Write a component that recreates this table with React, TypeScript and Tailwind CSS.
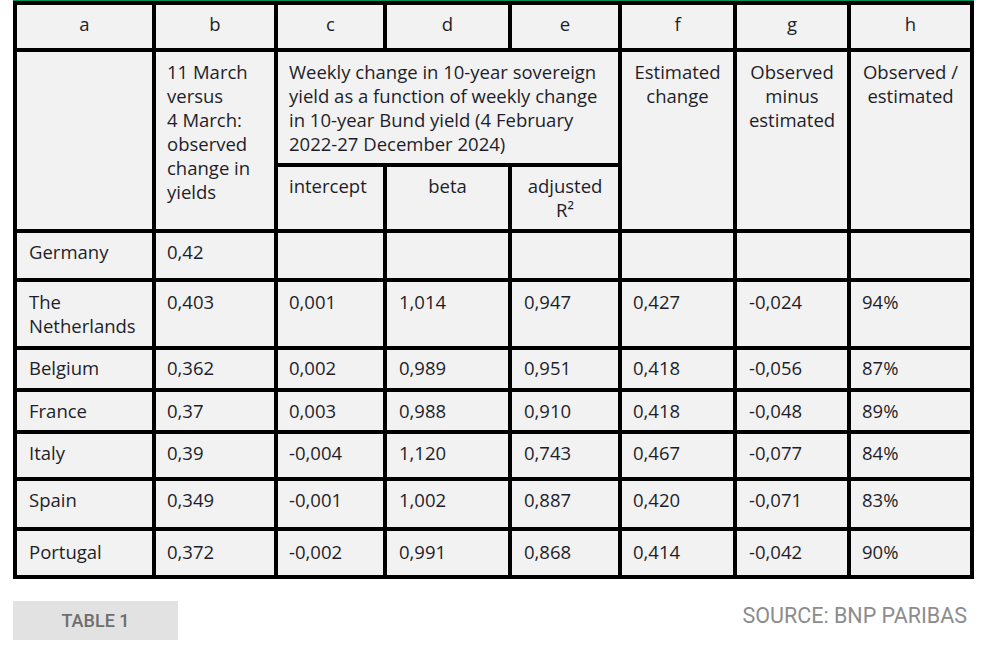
import React from 'react';

// --- TABLE DATA ---
const rows = [
    { name: ['Germany'], b: '0,42', c: '', d: '', e: '', f: '', g: '', h: '', h_: 'h-[45px]', pt: 'pt-[7px]' },
    { name: ['The', 'Netherlands'], b: '0,403', c: '0,001', d: '1,014', e: '0,947', f: '0,427', g: '-0,024', h: '94%', h_: 'h-[64px]', pt: 'pt-[8px]' },
    { name: ['Belgium'], b: '0,362', c: '0,002', d: '0,989', e: '0,951', f: '0,418', g: '-0,056', h: '87%', h_: 'h-[38px]', pt: 'pt-[6px]' },
    { name: ['France'], b: '0,37', c: '0,003', d: '0,988', e: '0,910', f: '0,418', g: '-0,048', h: '89%', h_: 'h-[38px]', pt: 'pt-[7px]' },
    { name: ['Italy'], b: '0,39', c: '-0,004', d: '1,120', e: '0,743', f: '0,467', g: '-0,077', h: '84%', h_: 'h-[43px]', pt: 'pt-[7px]' },
    { name: ['Spain'], b: '0,349', c: '-0,001', d: '1,002', e: '0,887', f: '0,420', g: '-0,071', h: '83%', h_: 'h-[46px]', pt: 'pt-[7px]' },
    { name: ['Portugal'], b: '0,372', c: '-0,002', d: '0,991', e: '0,868', f: '0,414', g: '-0,042', h: '90%', h_: 'h-[44px]', pt: 'pt-[9px]' },
];

const cell = 'bg-[#f2f2f2] text-[#1e1e2a] whitespace-nowrap';

const Lines: React.FC<{ lines: string[] }> = ({ lines }) => (
    <>
        {lines.map((l, i) => (
            <React.Fragment key={i}>
                {i > 0 && <br />}
                {l}
            </React.Fragment>
        ))}
    </>
);

const App = () => {
    return (
        <div className="w-[981px] h-[651px] bg-white" style={{ fontFamily: '"Open Sans", sans-serif' }}>
            <div className="ml-[13px] w-[961px]">
                <div className="h-px bg-[#00915a]" />

                {/* Table */}
                <div className="grid grid-cols-[135px_118px_105px_121px_106px_111px_110px_119px] gap-[4px] bg-black p-[4px] text-[18.5px] leading-[24px]">
                    {/* letter row */}
                    {['a', 'b', 'c', 'd', 'e', 'f', 'g', 'h'].map((l) => (
                        <div key={l} className={`${cell} h-[43px] pt-[7px] text-center`}>{l}</div>
                    ))}

                    {/* header rows */}
                    <div className={`${cell} row-span-2`} />
                    <div className={`${cell} row-span-2 pl-[11px] pt-[8px]`}>
                        <Lines lines={['11 March', 'versus', '4 March:', 'observed', 'change in', 'yields']} />
                    </div>
                    <div className={`${cell} col-span-3 h-[111px] pl-[11px] pt-[8px]`}>
                        <Lines lines={['Weekly change in 10-year sovereign', 'yield as a function of weekly change', 'in 10-year Bund yield (4 February', '2022-27 December 2024)']} />
                    </div>
                    <div className={`${cell} row-span-2 pt-[8px] text-center`}>
                        <Lines lines={['Estimated', 'change']} />
                    </div>
                    <div className={`${cell} row-span-2 pt-[8px] text-center`}>
                        <Lines lines={['Observed', 'minus', 'estimated']} />
                    </div>
                    <div className={`${cell} row-span-2 pt-[8px] text-center`}>
                        <Lines lines={['Observed /', 'estimated']} />
                    </div>
                    <div className={`${cell} h-[62px] pl-[11px] pt-[7px]`}>intercept</div>
                    <div className={`${cell} h-[62px] pt-[7px] text-center`}>beta</div>
                    <div className={`${cell} h-[62px] pt-[7px] text-center`}>
                        <Lines lines={['adjusted', 'R²']} />
                    </div>

                    {/* data rows */}
                    {rows.map((r) => (
                        <React.Fragment key={r.name.join(' ')}>
                            <div className={`${cell} ${r.h_} ${r.pt} pl-[12px]`}><Lines lines={r.name} /></div>
                            <div className={`${cell} ${r.h_} ${r.pt} pl-[11px]`}>{r.b}</div>
                            <div className={`${cell} ${r.h_} ${r.pt} pl-[11px]`}>{r.c}</div>
                            <div className={`${cell} ${r.h_} ${r.pt} pl-[12px]`}>{r.d}</div>
                            <div className={`${cell} ${r.h_} ${r.pt} pl-[12px]`}>{r.e}</div>
                            <div className={`${cell} ${r.h_} ${r.pt} pl-[11px]`}>{r.f}</div>
                            <div className={`${cell} ${r.h_} ${r.pt} pl-[12px]`}>{r.g}</div>
                            <div className={`${cell} ${r.h_} ${r.pt} pl-[11px]`}>{r.h}</div>
                        </React.Fragment>
                    ))}
                </div>

                {/* Footer */}
                <div className="mt-[22px] flex items-center justify-between">
                    <div className="flex h-[39px] w-[165px] items-center justify-center bg-[#e2e2e2] text-[18px] font-medium text-[#6e6e6e]" style={{ fontFamily: 'Roboto, sans-serif' }}>
                        TABLE 1
                    </div>
                    <div className="mr-[7px] -mt-[9px] text-[21.5px] text-[#8c8c8c]" style={{ fontFamily: 'Roboto, sans-serif' }}>
                        SOURCE: BNP PARIBAS
                    </div>
                </div>
            </div>
        </div>
    );
};

export default App;
